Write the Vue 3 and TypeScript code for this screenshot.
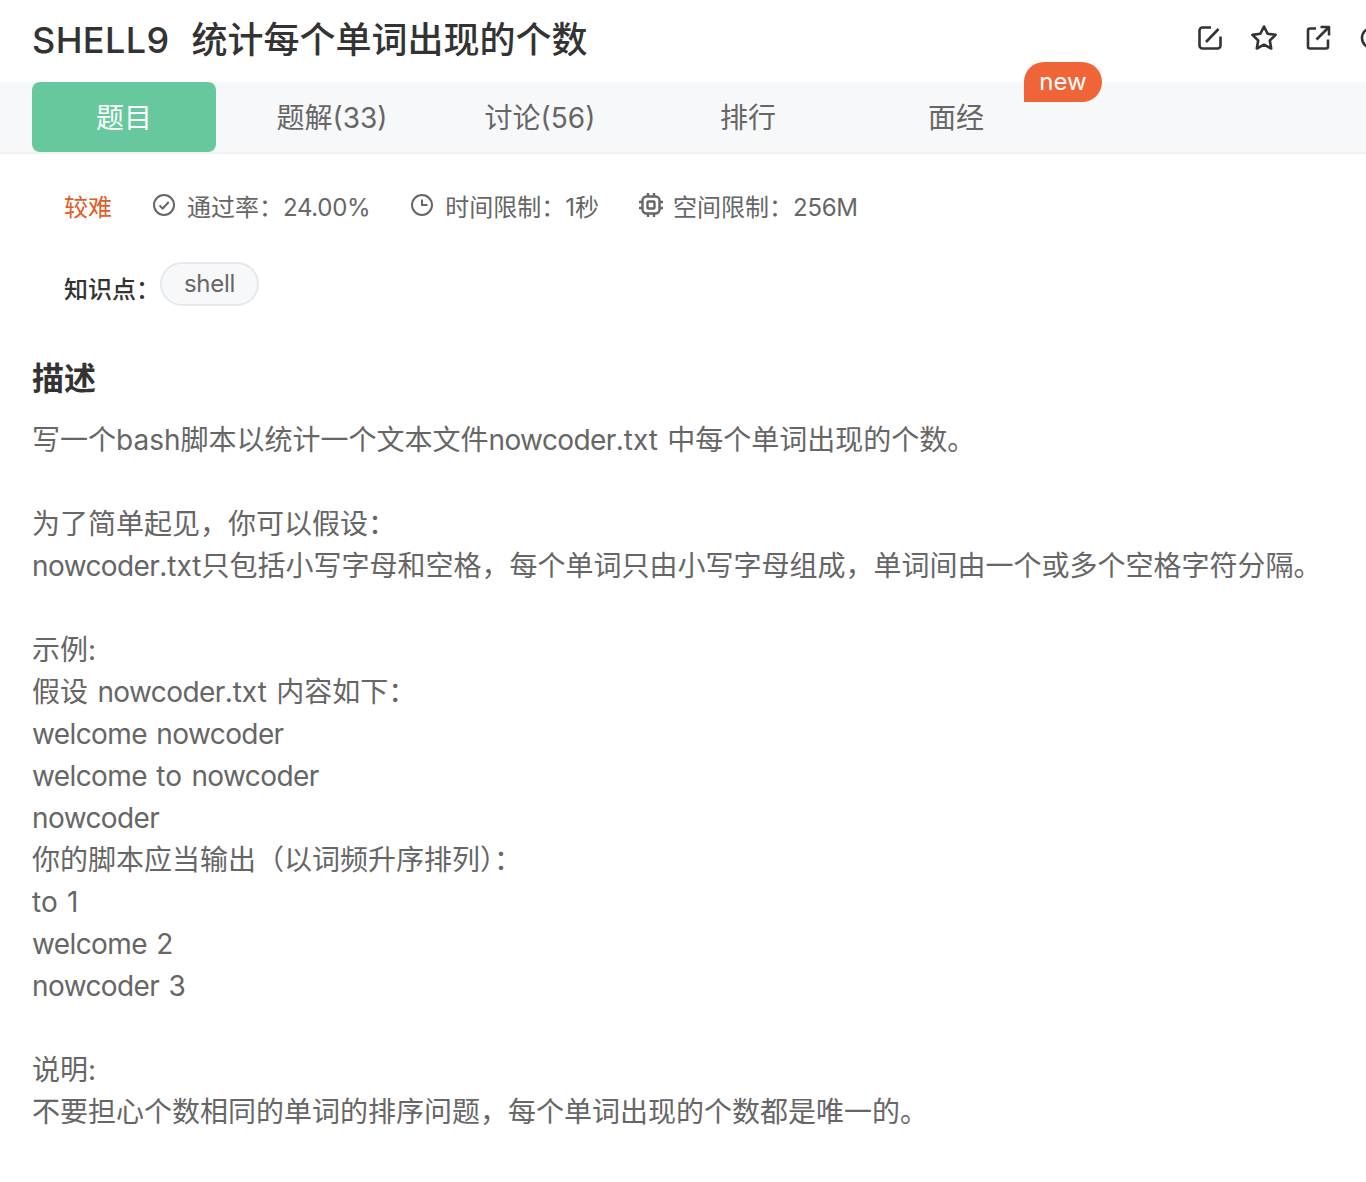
<script setup lang="ts">
const tabs = [
  { label: '题目', active: true },
  { label: '题解(33)' },
  { label: '讨论(56)' },
  { label: '排行' },
  { label: '面经', badge: 'new' },
];

const lines = [
  '写一个bash脚本以统计一个文本文件nowcoder.txt 中每个单词出现的个数。',
  '',
  '为了简单起见，你可以假设：',
  'nowcoder.txt只包括小写字母和空格，每个单词只由小写字母组成，单词间由一个或多个空格字符分隔。',
  '',
  '示例:',
  '假设 nowcoder.txt 内容如下：',
  'welcome nowcoder',
  'welcome to nowcoder',
  'nowcoder',
  '你的脚本应当输出（以词频升序排列）：',
  'to 1',
  'welcome 2',
  'nowcoder 3',
  '',
  '说明:',
  '不要担心个数相同的单词的排序问题，每个单词出现的个数都是唯一的。',
];

// the long latin words run tighter than the text around them
const splitLine = (line: string) =>
  line.split(/(welcome|nowcoder)/).map((text, i) => ({ text, latin: i % 2 === 1 }));
</script>

<template>
  <div class="page">
    <header class="title-row">
      <h1 class="title"><span class="code">SHELL9</span>统计每个单词出现的个数</h1>
      <div class="actions">
        <svg viewBox="0 0 28 28" class="action"><path d="M15 3.500H6.500a3 3 0 0 0-3 3v15a3 3 0 0 0 3 3h15a3 3 0 0 0 3-3v-9" /><path d="M10 18 22.500 5" /></svg>
        <svg viewBox="0 0 28 28" class="action"><path d="M14 2.500l3.600 7.200 8 1.200-5.800 5.600 1.400 8-7.200-3.800-7.200 3.800 1.400-8-5.800-5.600 8-1.200z" /></svg>
        <svg viewBox="0 0 28 28" class="action"><path d="M12 4.500H6a2 2 0 0 0-2 2v16a2 2 0 0 0 2 2h16a2 2 0 0 0 2-2v-7" /><path d="M12.500 15.500 24 4" /><path d="M16.500 3h8.500v8.500" /></svg>
        <svg viewBox="0 0 28 28" class="action"><circle cx="14" cy="14" r="10" /></svg>
      </div>
    </header>

    <nav class="tabs">
      <div v-for="tab in tabs" :key="tab.label" class="tab" :class="{ active: tab.active }">
        <span class="tab-label">{{ tab.label }}</span>
        <span v-if="tab.badge" class="badge">{{ tab.badge }}</span>
      </div>
    </nav>

    <section class="meta">
      <span class="level">较难</span>
      <span class="meta-item">
        <svg viewBox="0 0 24 24" class="meta-icon"><circle cx="12" cy="12" r="10" /><path d="M7.500 12.500l3.200 3 6-6.500" /></svg>
        <span>通过率：<span class="num">24.00%</span></span>
      </span>
      <span class="meta-item">
        <svg viewBox="0 0 24 24" class="meta-icon"><circle cx="12" cy="12" r="10" /><path d="M12 6.500V12h5.500" /></svg>
        <span>时间限制：1秒</span>
      </span>
      <span class="meta-item cpu-item">
        <svg viewBox="0 0 24 24" class="meta-icon cpu"><rect x="3.500" y="3.500" width="17" height="17" rx="4" /><rect x="8.500" y="8.500" width="7" height="7" rx="1" /><path d="M9 0v3.500M15 0v3.500M9 20.500V24M15 20.500V24M0 9h3.500M0 15h3.500M20.500 9H24M20.500 15H24" /></svg>
        <span>空间限制：<span class="num">256M</span></span>
      </span>
    </section>

    <section class="topics">
      <span class="topics-label">知识点：</span>
      <span class="pill">shell</span>
    </section>

    <section class="desc">
      <h2 class="desc-title">描述</h2>
      <div class="desc-body">
        <div v-for="(line, i) in lines" :key="i" class="line">
          <span v-for="(part, j) in splitLine(line)" :key="j" :class="{ latin: part.latin }">{{ part.text }}</span>
        </div>
      </div>
    </section>
  </div>
</template>

<style>
html,
body {
  margin: 0;
  background: #fff;
}
</style>

<style scoped>
.page {
  height: 1182px;
  overflow: hidden;
  font-family: Inter, "Noto Sans CJK SC", sans-serif;
  color: #666;
  background: #fff;
}

.title-row {
  height: 82px;
  padding-left: 32px;
  display: flex;
  align-items: center;
  justify-content: space-between;
}

.title {
  margin: 0;
  padding-bottom: 2px;
  font-size: 36px;
  line-height: 50px;
  font-weight: 500;
  color: #333;
}

.code {
  margin-right: 22px;
  letter-spacing: 0.4px;
}

.actions {
  display: flex;
  gap: 26px;
  margin-right: -20px;
  padding-bottom: 6px;
}

.action {
  width: 28px;
  height: 28px;
  fill: none;
  stroke: #333;
  stroke-width: 2.6;
  stroke-linejoin: round;
}

.tabs {
  height: 70px;
  padding-left: 32px;
  display: flex;
  gap: 24px;
  background: #f7f8fa;
  border-bottom: 2px solid #f1f2f4;
}

.tab {
  position: relative;
  width: 184px;
  height: 70px;
  border-radius: 8px;
  display: flex;
  align-items: center;
  justify-content: center;
  font-size: 28px;
  color: #666;
}

.tab-label {
  margin-top: -2px;
}

.tab.active {
  background: #66c89c;
  color: #fff;
}

.badge {
  position: absolute;
  left: 160px;
  top: -20px;
  width: 78px;
  height: 40px;
  border-radius: 20px 20px 20px 0;
  background: #f06537;
  color: #fff;
  font-size: 24px;
  line-height: 40px;
  text-align: center;
}

.meta {
  margin-top: 29px;
  padding-left: 64px;
  height: 44px;
  display: flex;
  align-items: center;
  gap: 40px;
  font-size: 24px;
}

.level {
  color: #e25a26;
}

.meta-item {
  display: flex;
  align-items: center;
  gap: 11px;
}

.cpu-item {
  gap: 10px;
}

.num {
  letter-spacing: -0.3px;
}

.meta-icon {
  width: 24px;
  height: 24px;
  fill: none;
  stroke: #666;
  stroke-width: 2;
}

.meta-icon.cpu {
  stroke-width: 2.4;
}

.topics {
  margin-top: 35px;
  padding-left: 64px;
  display: flex;
  align-items: center;
  height: 44px;
}

.topics-label {
  font-size: 24px;
  font-weight: 500;
  color: #333;
  margin-top: 6px;
}

.pill {
  height: 40px;
  padding: 0 22px;
  border: 2px solid #e6e8eb;
  border-radius: 22px;
  background: #f7f8fa;
  font-size: 24px;
  line-height: 40px;
  letter-spacing: -0.3px;
  color: #666;
}

.desc {
  padding: 0 32px;
  margin-top: 50px;
}

.desc-title {
  margin: 0;
  font-size: 32px;
  line-height: 46px;
  font-weight: 700;
  color: #333;
}

.desc-body {
  margin-top: 17px;
  font-size: 28px;
  line-height: 42px;
  word-spacing: 1.5px;
}

.line {
  min-height: 42px;
  white-space: nowrap;
}

.latin {
  letter-spacing: -0.6px;
}
</style>
